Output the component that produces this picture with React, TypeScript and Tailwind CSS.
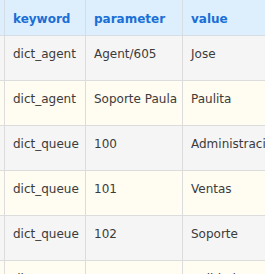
const rows = [
  ['dict_agent', 'Agent/605', 'Jose'],
  ['dict_agent', 'Soporte Paula', 'Paulita'],
  ['dict_queue', '100', 'Administración'],
  ['dict_queue', '101', 'Ventas'],
  ['dict_queue', '102', 'Soporte'],
  ['dict_queue', '103', 'Calidad'],
]

export default function App() {
  return (
    <div className="w-[265px] h-[274px] overflow-hidden bg-white font-['DejaVu_Sans',sans-serif] text-[12px] leading-[14px]">
      <table className="border-separate border-spacing-0 table-fixed w-[400px]">
        <colgroup>
          <col className="w-[5px]" />
          <col className="w-[81px]" />
          <col className="w-[97px]" />
          <col className="w-[217px]" />
        </colgroup>
        <thead>
          <tr className="bg-[#ddeefd] text-[#1a6fd6] font-bold text-left">
            <th className="h-[36px] p-0 border-r border-b border-[#d6dde5]" />
            <th className="h-[36px] pl-[8px] pt-[12px] align-top border-r border-b border-[#d6dde5] whitespace-nowrap">keyword</th>
            <th className="h-[36px] pl-[8px] pt-[12px] align-top border-r border-b border-[#d6dde5] whitespace-nowrap">parameter</th>
            <th className="h-[36px] pl-[8px] pt-[12px] align-top border-b border-[#d6dde5] whitespace-nowrap">value</th>
          </tr>
        </thead>
        <tbody className="text-[#3b3b3b]">
          {rows.map((r, i) => (
            <tr key={i} className={i % 2 === 0 ? 'bg-[#f5f5f5]' : 'bg-[#fffcf2]'}>
              <td className="h-[45px] p-0 border-r border-b border-[#dcdcdc]" />
              <td className="h-[45px] pl-[8px] pt-[11px] align-top border-r border-b border-[#dcdcdc] whitespace-nowrap">{r[0]}</td>
              <td className="h-[45px] pl-[8px] pt-[11px] align-top border-r border-b border-[#dcdcdc] whitespace-nowrap">{r[1]}</td>
              <td className="h-[45px] pl-[8px] pt-[11px] align-top border-b border-[#dcdcdc] whitespace-nowrap">{r[2]}</td>
            </tr>
          ))}
        </tbody>
      </table>
    </div>
  )
}
